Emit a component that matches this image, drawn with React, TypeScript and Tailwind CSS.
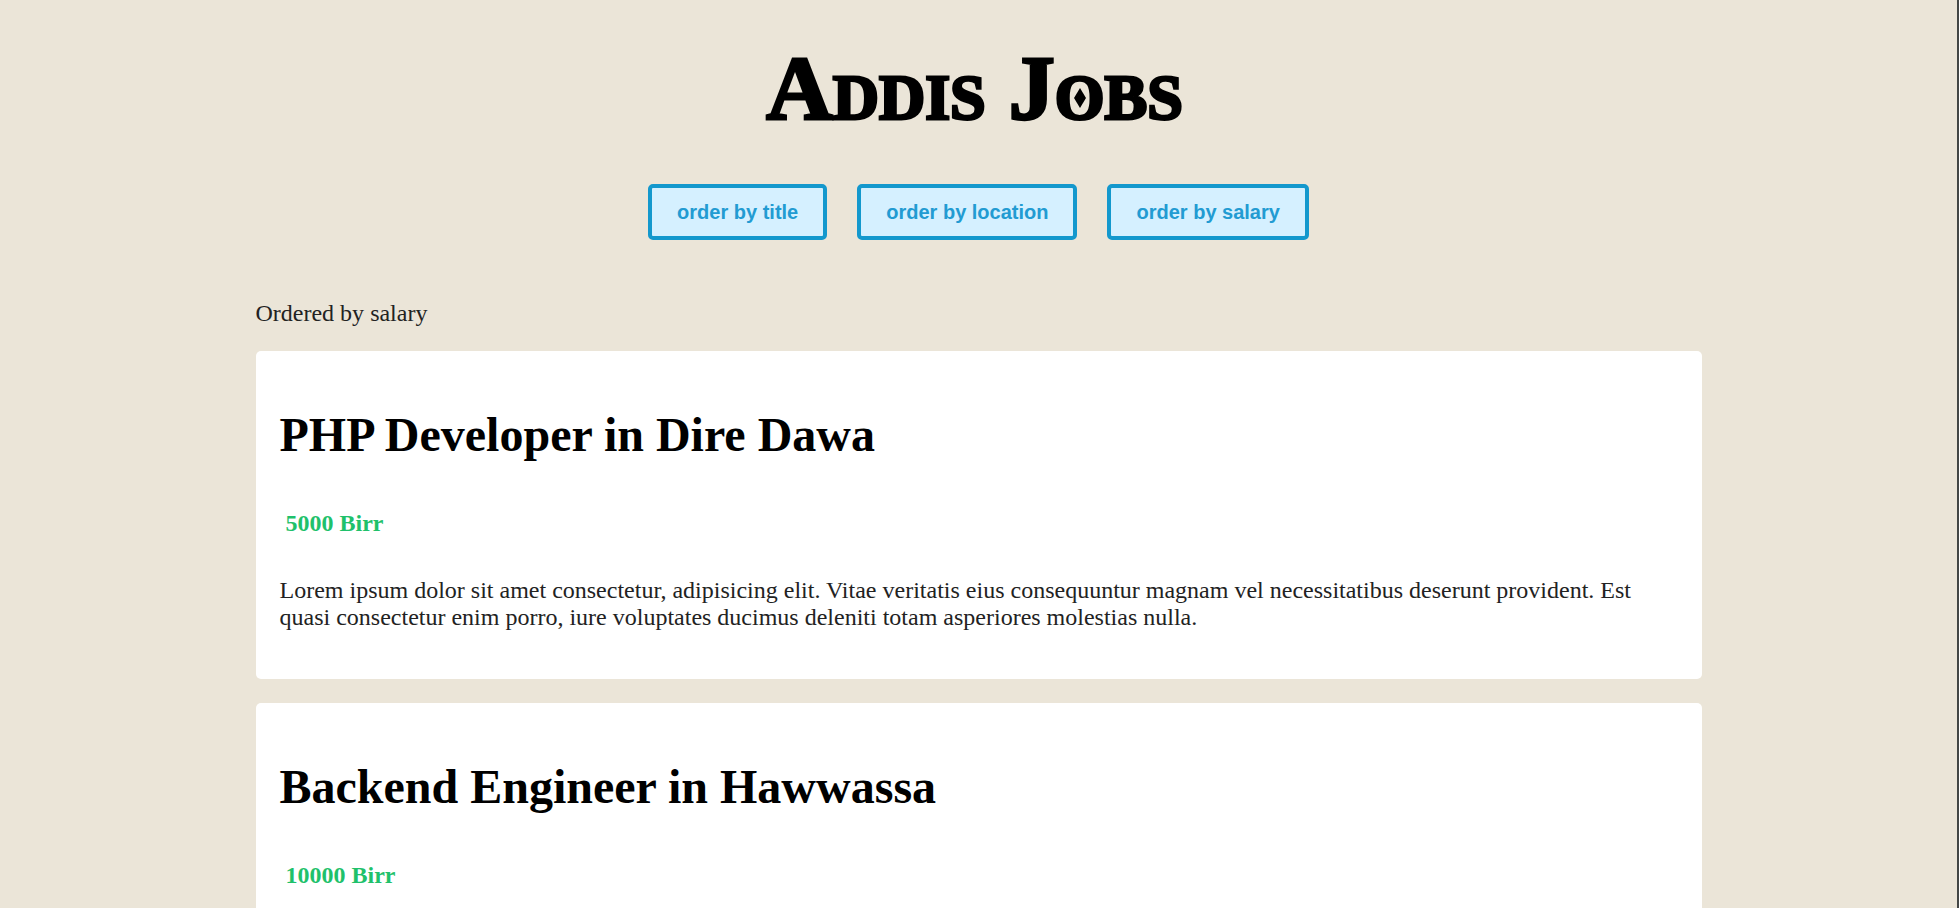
import { useState } from "react";

type Order = "title" | "location" | "salary";

interface Job {
  title: string;
  location: string;
  salary: number;
}

const orders: Order[] = ["title", "location", "salary"];

const jobs: Job[] = [
  { title: "PHP Developer", location: "Dire Dawa", salary: 5000 },
  { title: "Backend Engineer", location: "Hawwassa", salary: 10000 },
];

const description =
  "Lorem ipsum dolor sit amet consectetur, adipisicing elit. Vitae veritatis eius consequuntur magnam vel necessitatibus deserunt provident. Est quasi consectetur enim porro, iure voluptates ducimus deleniti totam asperiores molestias nulla.";

function Title() {
  return (
    <h1 className="pr-2 text-center text-[92px] leading-[96px] font-bold [font-variant-caps:small-caps] [-webkit-text-stroke:3px_black]">
      Addis J
      <span className="relative">
        o
        <svg
          viewBox="0 0 12 20"
          className="absolute bottom-[31px] left-1/2 h-5 w-3 -translate-x-1/2"
          aria-hidden="true"
        >
          <path d="M6 0 12 10 6 20 0 10Z" fill="black" />
        </svg>
      </span>
      bs
    </h1>
  );
}

function JobCard({ job }: { job: Job }) {
  return (
    <article className="rounded-[5px] bg-white px-6 pt-14 pb-12">
      <h2 className="text-5xl leading-[55px] font-bold">
        {job.title} in {job.location}
      </h2>
      <p className="mt-12 px-1.5 font-bold text-[#1fc16b]">{job.salary} Birr</p>
      <p className="mt-10 text-[#222222]">{description}</p>
    </article>
  );
}

export default function App() {
  const [order, setOrder] = useState<Order>("salary");
  const sorted = [...jobs].sort((a, b) =>
    order === "salary" ? a.salary - b.salary : a[order].localeCompare(b[order]),
  );

  return (
    <div className="min-h-screen border-r-2 border-[#444746] bg-[#ebe5d8] font-['Liberation_Serif',serif] text-2xl leading-[27px] text-black">
      <main className="mx-auto max-w-[1446px] pt-10 pb-6">
        <header>
          <Title />
          <nav className="mt-12 flex flex-wrap justify-center gap-[30px]">
            {orders.map((o) => (
              <button
                key={o}
                type="button"
                onClick={() => setOrder(o)}
                className="cursor-pointer rounded-[5px] border-4 border-[#1398cd] bg-[#d5f0ff] px-[25px] py-3 font-['Liberation_Sans',sans-serif] text-xl leading-6 font-bold text-[#229bd2]"
              >
                order by {o}
              </button>
            ))}
          </nav>
        </header>
        <p className="mt-[60px] text-[#222222]">Ordered by {order}</p>
        <section className="mt-6 flex flex-col gap-6">
          {sorted.map((job) => (
            <JobCard key={job.title} job={job} />
          ))}
        </section>
      </main>
    </div>
  );
}
